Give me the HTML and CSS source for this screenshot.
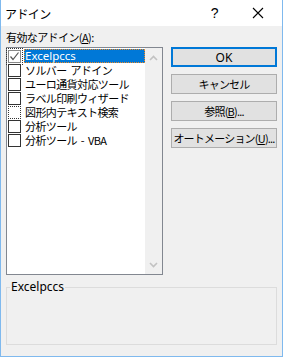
FILE: index.html
```html
<!DOCTYPE html>
<html lang="ja">

<head>
	<meta charset="UTF-8">
	<title>アドイン</title>
	<link rel="stylesheet" href="styles.css">
</head>

<body>
	<div class="window">
		<div class="titlebar">
			<span class="title">アドイン</span>
			<span class="help">?</span>
			<svg class="close" width="12" height="12" viewBox="0 0 12 12">
				<path d="M1 1 L11 11 M11 1 L1 11" stroke="#000" stroke-width="1.1" fill="none" />
			</svg>
		</div>

		<div class="content">
			<div class="list-label">有効なアドイン(<u>A</u>):</div>

			<div class="main">
				<div class="listbox">
					<div class="items">
						<div class="item">
							<span class="check checked">
								<svg width="11" height="11" viewBox="0 0 11 11">
									<path d="M1.5 5.5 L4 8.5 L9.5 1.5" stroke="#555" stroke-width="1.2" fill="none" />
								</svg>
							</span>
							<span class="name selected">Excelpccs</span>
						</div>
						<div class="item"><span class="check"></span><span class="name">ソルバー アドイン</span></div>
						<div class="item"><span class="check"></span><span class="name">ユーロ通貨対応ツール</span></div>
						<div class="item"><span class="check"></span><span class="name">ラベル印刷ウィザード</span></div>
						<div class="item"><span class="check dotted"></span><span class="name">図形内テキスト検索</span></div>
						<div class="item"><span class="check"></span><span class="name">分析ツール</span></div>
						<div class="item"><span class="check"></span><span class="name">分析ツール - VBA</span></div>
					</div>
					<div class="scrollbar">
						<svg width="9" height="6" viewBox="0 0 9 6">
							<path d="M1 5 L4.5 1.5 L8 5" stroke="#c2c2c2" stroke-width="1.6" fill="none" />
						</svg>
						<svg width="9" height="6" viewBox="0 0 9 6">
							<path d="M1 1 L4.5 4.5 L8 1" stroke="#c2c2c2" stroke-width="1.6" fill="none" />
						</svg>
					</div>
				</div>

				<div class="buttons">
					<button class="btn default">OK</button>
					<button class="btn">キャンセル</button>
					<button class="btn">参照(<u>B</u>)...</button>
					<button class="btn">オートメーション(<u>U</u>)...</button>
				</div>
			</div>

			<fieldset class="group">
				<legend>Excelpccs</legend>
			</fieldset>
		</div>
	</div>
</body>

</html>
```

FILE: styles.css
```css
body {
	margin: 0;
	font-family: "Noto Sans CJK JP", "Noto Sans", sans-serif;
	font-size: 11px;
	letter-spacing: -0.6px;
	color: #000;
}

.window {
	width: 283px;
	height: 357px;
	box-sizing: border-box;
	border: 1px solid #7fb9ee;
	border-top: none;
	background-color: #f0f0f0;
	display: flex;
	flex-direction: column;
}

.titlebar {
	height: 26px;
	background-color: #fff;
	display: flex;
	align-items: center;
	padding-left: 4px;
}

.title {
	flex: 1;
	font-size: 12px;
}

.help {
	font-family: "Liberation Sans", sans-serif;
	font-size: 14px;
	margin-right: 34px;
}

.close {
	margin-right: 18px;
}

.content {
	padding: 3px 5px 0 5px;
}

.list-label {
	height: 18px;
	line-height: 16px;
}

.list-label u,
.btn u {
	text-decoration-thickness: 1px;
	text-underline-offset: 1px;
}

.main {
	display: flex;
	gap: 8px;
}

.listbox {
	width: 157px;
	height: 228px;
	box-sizing: border-box;
	border: 1px solid #828790;
	background-color: #fff;
	display: flex;
	flex: none;
}

.items {
	flex: 1;
	min-width: 0;
	padding-top: 1px;
}

.item {
	height: 14px;
	display: flex;
	align-items: center;
}

.check {
	width: 11px;
	height: 11px;
	border: 1px solid #333;
	background-color: #fff;
	margin-left: 1px;
	margin-right: 3px;
	flex: none;
	display: flex;
}

.check.checked {
	border-color: #888;
	outline: 1px dotted #333;
	outline-offset: 1px;
}

.check.dotted {
	border-style: dotted;
}

.name {
	line-height: 14px;
	white-space: pre;
	word-spacing: 2px;
	padding-left: 1px;
}

.name.selected {
	flex: 1;
	height: 14px;
	box-sizing: border-box;
	background-color: #0078d7;
	color: #fff;
	outline: 1px dotted #f08a24;
	outline-offset: -1px;
	font-family: "Noto Sans", sans-serif;
	font-size: 11.5px;
	letter-spacing: 0;
	line-height: 14px;
}

.scrollbar {
	width: 17px;
	flex: none;
	background-color: #f0f0f0;
	display: flex;
	flex-direction: column;
	justify-content: space-between;
	align-items: center;
	padding: 7px 0 6px 0;
}

.buttons {
	display: flex;
	flex-direction: column;
	gap: 7px;
}

.btn {
	width: 106px;
	height: 20px;
	box-sizing: border-box;
	border: 1px solid #adadad;
	background-color: #e1e1e1;
	font-family: "Noto Sans CJK JP", "Noto Sans", sans-serif;
	font-size: 11px;
	letter-spacing: -0.8px;
	white-space: nowrap;
	padding: 0;
	color: #000;
}

.btn.default {
	border: 2px solid #0078d7;
	font-family: "Noto Sans", sans-serif;
	font-size: 12px;
	letter-spacing: 0;
}

.group {
	margin: 6px 0 0 0;
	height: 64px;
	box-sizing: border-box;
	border: 1px solid #dcdcdc;
	padding: 0;
}

.group legend {
	font-family: "Noto Sans", sans-serif;
	font-size: 12px;
	letter-spacing: 0;
	padding: 0 1px;
	margin-left: 3px;
	line-height: 12px;
}
```
